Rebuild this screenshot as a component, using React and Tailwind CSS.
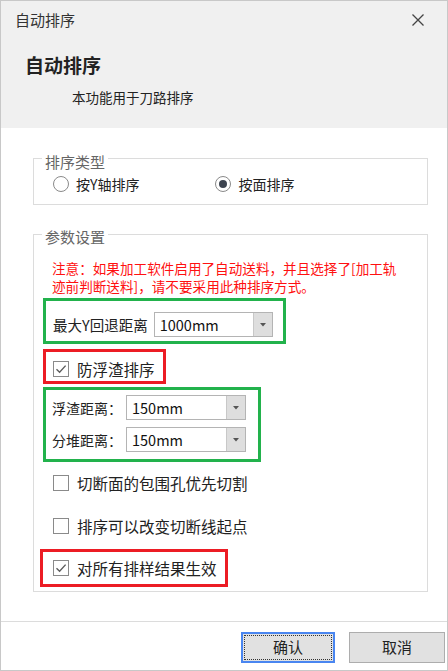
import React from "react";

const Radio = ({ checked, label }) => (
  <label className="flex items-center gap-[7px] h-[16px]">
    <span className="w-[16px] h-[16px] rounded-full border border-[#8a8a8a] bg-white flex items-center justify-center">
      {checked && <span className="w-[8px] h-[8px] rounded-full bg-[#3d4450]" />}
    </span>
    <span className="text-[14px] leading-[16px] text-[#222]">{label}</span>
  </label>
);

const Check = ({ checked, label }) => (
  <label className="flex items-center gap-[8px] h-[16px]">
    <span className="w-[16px] h-[16px] border border-[#8a8a8a] bg-white flex items-center justify-center">
      {checked && (
        <svg width="12" height="12" viewBox="0 0 12 12">
          <path d="M1.5 6.2 L4.6 9.2 L10.6 2.6" fill="none" stroke="#5c5c5c" strokeWidth="1.4" />
        </svg>
      )}
    </span>
    <span className="text-[15.5px] leading-[16px] text-[#222] whitespace-nowrap">{label}</span>
  </label>
);

const Select = ({ value, width }) => (
  <div className={`flex shrink-0 h-[25px] border border-[#b4b4b4] bg-white ${width}`}>
    <div className="flex-1 pl-[5px] text-[14.5px] leading-[23px] text-[#111]">{value}</div>
    <div className="w-[19px] bg-[#dedede] border-l border-[#c8c8c8] flex items-center justify-center">
      <svg width="6" height="4" viewBox="0 0 6 4">
        <path d="M0 0 H6 L3 3.5 Z" fill="#555" />
      </svg>
    </div>
  </div>
);

export default function App() {
  return (
    <div className="w-[448px] h-[671px] flex flex-col border border-[#c8c8c8] bg-white font-['Microsoft_YaHei','Noto_Sans_CJK_SC',sans-serif]">
      {/* TOP */}
      <div className="bg-[#f0f0f0]">
        <div className="h-[38px] flex items-center justify-between pl-[14px] pr-[23px]">
          <span className="text-[15px] leading-[20px] text-[#333]">自动排序</span>
          <svg width="12" height="12" viewBox="0 0 12 12">
            <path d="M0.5 0.5 L11.5 11.5 M11.5 0.5 L0.5 11.5" stroke="#444" strokeWidth="1.3" />
          </svg>
        </div>
        <div className="pl-[24px] pt-[14px] text-[19px] leading-[24px] font-bold text-[#222]">自动排序</div>
        <div className="pl-[71px] pt-[12px] pb-[23px] text-[13.5px] leading-[16px] text-[#222]">本功能用于刀路排序</div>
      </div>

      {/* CONTENT */}
      <div className="flex-1">
        <fieldset className="ml-[32px] mt-[16px] w-[395px] border border-[#dcdcdc] pl-[19px] pb-[12px]">
          <legend className="-ml-[11px] px-[3px] pt-[8px] text-[15px] leading-[20px] text-[#666]">排序类型</legend>
          <div className="flex gap-[76px] mt-[4px]">
            <Radio label="按Y轴排序" />
            <Radio checked label="按面排序" />
          </div>
        </fieldset>

        <fieldset className="ml-[32px] mt-[16px] w-[395px] border border-[#dcdcdc] pl-[9px] pb-[4px]">
          <legend className="-ml-[1px] px-[3px] pt-[6px] text-[15px] leading-[20px] text-[#666]">参数设置</legend>
          <p className="ml-[9px] mt-[12px] text-[13.6px] leading-[18px] text-[#ff1010]">
            注意：如果加工软件启用了自动送料，并且选择了[加工轨
            <br />
            迹前判断送料]，请不要采用此种排序方式。
          </p>

          <div className="mt-[3px] w-[243px] border-[3px] border-[#22b24c] pl-[7px] pt-[11px] pb-[4px] flex items-center gap-[6px]">
            <span className="text-[14.5px] leading-[20px] text-[#222] whitespace-nowrap">最大Y回退距离</span>
            <Select value="1000mm" width="w-[119px]" />
          </div>

          <div className="mt-[5px] w-[123px] border-[3px] border-[#ec1c24] pl-[7px] pt-[9px] pb-[4px]">
            <Check checked label="防浮渣排序" />
          </div>

          <div className="mt-[3px] w-[218px] border-[3px] border-[#22b24c] pl-[6px] pt-[5px] pb-[7px] flex flex-col gap-[7px]">
            <div className="flex items-center">
              <span className="w-[74px] shrink-0 whitespace-nowrap text-[14px] leading-[20px] text-[#222]">浮渣距离：</span>
              <Select value="150mm" width="w-[120px]" />
            </div>
            <div className="flex items-center">
              <span className="w-[74px] shrink-0 whitespace-nowrap text-[14px] leading-[20px] text-[#222]">分堆距离：</span>
              <Select value="150mm" width="w-[120px]" />
            </div>
          </div>

          <div className="ml-[10px] mt-[13px]">
            <Check label="切断面的包围孔优先切割" />
          </div>
          <div className="ml-[10px] mt-[27px]">
            <Check label="排序可以改变切断线起点" />
          </div>

          <div className="-ml-[3px] mt-[15px] w-[188px] border-[3px] border-[#ec1c24] pl-[10px] pt-[8px] pb-[8px]">
            <Check checked label="对所有排样结果生效" />
          </div>
        </fieldset>
      </div>

      {/* FOOTER */}
      <div className="h-[49px] border-t border-[#dcdcdc] flex justify-end gap-[14px] pt-[10px] pr-[2px]">
        <button className="w-[94px] h-[31px] border-2 border-[#4a86f0] bg-[#e1e1e1] p-[1px]">
          <span className="w-full h-full border border-dotted border-[#333] flex items-center justify-center text-[15px] text-[#222]">确认</span>
        </button>
        <button className="w-[96px] h-[31px] border border-[#adadad] bg-[#e1e1e1] flex items-center justify-center text-[15px] text-[#222]">取消</button>
      </div>
    </div>
  );
}
